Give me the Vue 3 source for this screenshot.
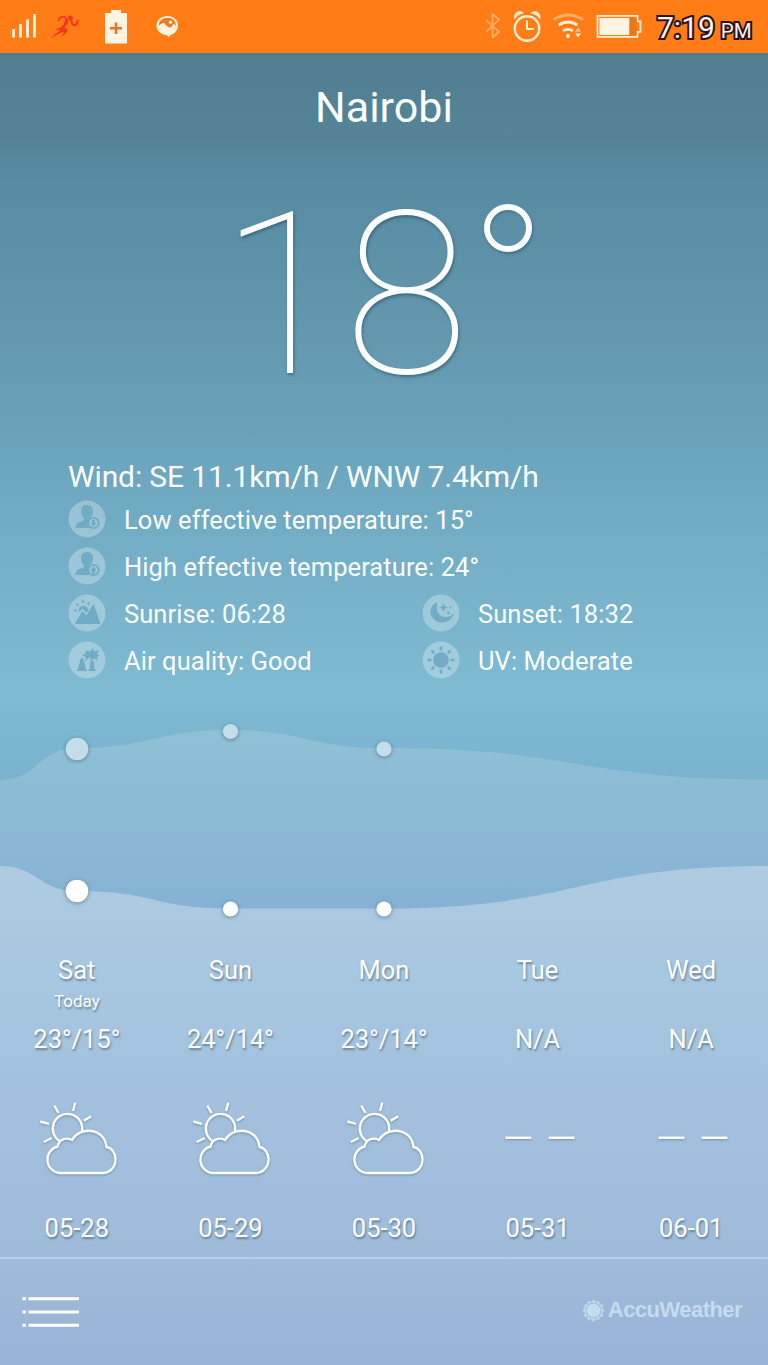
<template>
  <div class="weather-app">
    <!-- Status Bar -->
    <header class="status-bar">
      <svg class="icon-signal" width="26" height="24" viewBox="12 14 26 24">
        <path d="M14.5 29v8.5M21.5 24v13.5M28.5 19.5v18M35.5 14v23.5" stroke="#fff3df" stroke-width="2.8" />
      </svg>
      <svg class="icon-runner" width="30" height="26" viewBox="50 14 30 26">
        <circle cx="70.500" cy="18" r="2.500" fill="#f5381c" />
        <g fill="none" stroke="#f5381c">
          <path d="M58.500 21Q59.500 15.500 65.500 17" stroke-width="2" />
          <path d="M71.500 20.500Q72 26 75.500 25Q78 23.500 77.500 20" stroke-width="2.200" />
        </g>
        <path d="M64.500 16.500Q70 19 67.500 24L64.500 27.500Q69 29 66.500 32.500Q64.500 34.500 61.500 36.500Q64 33 63.500 31.500Q57 34.500 51 38Q55.500 33 60.500 30.500L55 29.500Q60 28.500 62.500 26Q66 21 64.500 16.500z" fill="#f5381c" />
      </svg>
      <svg class="icon-saver" width="24" height="36" viewBox="104 9 24 36">
        <path d="M105 13h6v-3h10v3h6v30.500h-22z" fill="#fff3e4" />
        <path d="M116 22.500v11.500M110 28.200h12" stroke="#e5761f" stroke-width="2.600" />
      </svg>
      <svg class="icon-photo" width="24" height="24" viewBox="155 14 24 24">
        <path d="M167.500 16c6 0 10.500 4 10.500 9.500c0 4.500-3 8-7 9.200l-2.500 2.500l-2-2.200c-6-.4-10-4.500-10-9.500c0-5.500 5-9.500 11-9.500z" fill="#fff3df" />
        <path d="M158.800 25.500c0-4.500 4-7.700 8.700-7.700c5 0 8.500 3.200 8.500 8.200l-2.200-2.500l-2.800 4l-3-.5l-4.500-4.500z" fill="#eb7a24" />
        <circle cx="170.500" cy="22.200" r="1.700" fill="#fff3df" />
      </svg>

      <svg class="icon-bluetooth" width="18" height="28" viewBox="484 12 18 28">
        <path d="M486 20l13 12l-6.500 5.500V14l6.500 5.500L486 32" fill="none" stroke="#ffb168" stroke-width="1.700" />
      </svg>
      <svg class="icon-alarm" width="30" height="34" viewBox="512 10 30 34">
        <g fill="none" stroke="#fff0d2">
          <circle cx="527" cy="28.500" r="12.200" stroke-width="2.400" />
          <path d="M527 20.500v8.500h7" stroke-width="2" />
        </g>
        <path d="M514.500 19c-1.500-6 5-10 9-6q-6.500 1.500-9 6zM540 19c1.500-6-5-10-9-6q6.500 1.500 9 6z" fill="#fff0d2" stroke="#fff0d2" stroke-width="0.600" />
      </svg>
      <svg class="icon-wifi" width="34" height="28" viewBox="552 11 34 28">
        <g fill="none">
          <path d="M553.500 19.500q14.500-9 29.500 0" stroke="#ffb063" stroke-width="3" />
          <path d="M558.500 25q9.500-6 19 0" stroke="#fff3df" stroke-width="2.800" />
          <path d="M563 30.800q5-3 10 0" stroke="#fff3df" stroke-width="2.700" />
        </g>
        <circle cx="568" cy="36" r="2" fill="#fff3df" />
        <path d="M575 31.500l3-4l3 4z" fill="#ffc58c" />
        <path d="M575 33.500h6l-3 4z" fill="#fff3df" />
      </svg>
      <svg class="icon-battery" width="46" height="26" viewBox="596 14 46 26">
        <path d="M597.500 15.800h40v5.500h3v10.500h-3v5h-40z" fill="none" stroke="#fff0d2" stroke-width="1.800" />
        <rect x="599.500" y="18" width="30" height="17" fill="#fff3e4" />
        <rect x="629.500" y="18" width="7" height="17" fill="#eb761b" />
      </svg>
      <div class="clock">7:19<span class="meridiem">PM</span></div>
    </header>

    <!-- Current Conditions -->
    <h1 class="city">Nairobi</h1>
    <div class="temperature">18<span class="degree"></span></div>

    <section class="details">
      <p class="wind">Wind: SE 11.1km/h / WNW 7.4km/h</p>
      <div class="detail-grid">
        <div
          v-for="item in details"
          :key="item.label"
          class="detail"
          :class="{ 'detail-wide': item.wide }"
        >
          <svg class="detail-icon" width="38" height="38" viewBox="0 0 38 38">
            <circle cx="19" cy="19" r="18.500" fill="#fff" fill-opacity="0.29" />
            <g v-if="item.icon === 'low' || item.icon === 'high'" class="glyph">
              <path d="M19 5c4 0 6 2.500 6 6.200c0 3-1.300 5.300-3 7v2.300l3 1.500v6H7.500c0-4.500 2-5.500 5.500-6.500c2.500-.7 3-1.200 3-2.800v-.5c-1.700-1.700-3-4-3-7C13 7.500 15 5 19 5z" />
              <circle cx="25.500" cy="23" r="5.200" class="glyph-ring" />
              <path v-if="item.icon === 'low'" d="M24 19.800h3v3h1.500L25.500 27l-3-4.200H24z" />
              <path v-else d="M24 26.500h3v-3h1.500l-3-4.200l-3 4.200H24z" />
            </g>
            <g v-else-if="item.icon === 'sunrise'" class="glyph">
              <path d="M6.500 30l8-13l4 4.500L25.500 9.500L32.500 30z" />
              <path d="M11 18.500q-1.500-6 4-6.800q4 0 5.500 4.300l-2.300 3l-3.500-4.500z" />
              <circle v-for="(p, i) in sunriseDots" :key="i" :cx="p[0]" :cy="p[1]" r="1.300" />
            </g>
            <g v-else-if="item.icon === 'sunset'" class="glyph">
              <path d="M15.500 8.500c-2.500 7.500 1 15.500 9.500 14.500q4-.5 7-4c-1.500 6-6.500 10-12.500 9.500c-6-.5-11-5-11-11c0-4.500 3-8 7-9z" />
              <path d="M21.500 9l1.200 3.300l3.300 1.200l-3.300 1.200l-1.200 3.300l-1.200-3.300l-3.300-1.200l3.300-1.200z" />
              <circle cx="26.500" cy="19" r="1.400" />
              <circle cx="28.500" cy="13.500" r="1" />
            </g>
            <g v-else-if="item.icon === 'air'" class="glyph">
              <path d="M8 30l2-2l2.500-10q2-2 3 0l2.500 10l1 2z" />
              <path d="M19.500 30l2-2l1-8h3.500l.5 8l2 2z" />
              <path d="M14 14l3-1l1-3.500l4 1l3-3.500l1 3.500l5-1.500l-2 4l2.500 1.500l-3 1.500l1.500 4l-4-2.500l-3 3l-1-4.500l-5 4.500l1-4z" />
            </g>
            <g v-else class="glyph">
              <circle cx="19" cy="19" r="7.800" />
              <ellipse
                v-for="n in 8"
                :key="n"
                cx="19"
                cy="7.500"
                rx="1.400"
                ry="2.200"
                :transform="`rotate(${n * 45} 19 19)`"
              />
            </g>
          </svg>
          <span>{{ item.label }}</span>
        </div>
      </div>
    </section>

    <!-- High / Low Waves -->
    <svg class="chart" width="768" height="240" viewBox="0 0 768 240">
      <defs>
        <linearGradient id="highFill" x1="0" y1="31" x2="0" y2="210" gradientUnits="userSpaceOnUse">
          <stop offset="0" stop-color="#8fc1d6" />
          <stop offset="0.600" stop-color="#8ab8d4" />
          <stop offset="1" stop-color="#85b2d3" />
        </linearGradient>
        <linearGradient id="lowFill" x1="0" y1="166" x2="0" y2="240" gradientUnits="userSpaceOnUse">
          <stop offset="0" stop-color="#aecbe1" />
          <stop offset="1" stop-color="#a9c8e0" />
        </linearGradient>
      </defs>
      <path d="M0 80C38 80 38 48 77 48C154 48 154 30 230 30C307 30 307 48 384 48C576 48 576 79.500 768 79.500V240H0z" fill="url(#highFill)" />
      <path d="M0 166C38 166 38 191 77 191C154 191 154 208.500 230 208.500H384C576 208.500 576 166 768 166V240H0z" fill="url(#lowFill)" />
      <g class="dots">
        <circle cx="77" cy="49" r="11.300" fill="#c3deea" />
        <circle cx="230.500" cy="31.500" r="7.600" fill="#c3deea" />
        <circle cx="384" cy="49" r="7.600" fill="#c3deea" />
        <circle cx="77" cy="191" r="11.300" fill="#fff" />
        <circle cx="230.500" cy="209" r="7.600" fill="#fff" />
        <circle cx="384" cy="209" r="7.600" fill="#fff" />
      </g>
    </svg>

    <!-- Forecast -->
    <section class="forecast">
      <div v-for="day in forecast" :key="day.date" class="day">
        <div class="day-name">{{ day.name }}</div>
        <div class="day-note">{{ day.note }}</div>
        <div class="day-temp">{{ day.temp }}</div>
        <svg class="day-icon" width="84" height="85" viewBox="35 155 84 85">
          <g v-if="day.cloudy">
            <path d="M60.500 201.500A14.700 14.700 0 1 1 82 191" />
            <path d="M54.300 165.500l4.200 7.500M75.300 162.500l-2.300 8.500M91.300 176.200l-7.600 4.600M40.300 181.500l8.700 2.300M43.700 202l8-4" />
            <path d="M59.500 233A13.500 13.500 0 0 1 57.500 206.500C59.500 198 67 197.500 72 200C80 186 104.500 187.500 106.500 207C112 208 115.500 213 115.500 219.500C115.500 227 110 233 102 233Z" />
          </g>
          <path v-else d="M44.500 197.700h26M87.500 197.700h26" />
        </svg>
        <div class="day-date">{{ day.date }}</div>
      </div>
    </section>

    <!-- Footer -->
    <footer class="footer">
      <svg class="menu" width="58" height="32" viewBox="22 1296 58 32">
        <path d="M22.500 1298.800h3.500M28.500 1298.800h50.500M22.500 1312h3.500M28.500 1312h50.500M22.500 1325.300h3.500M28.500 1325.300h50.500" />
      </svg>
      <div class="brand">
        <svg width="23" height="23" viewBox="-11.500 -11.500 23 23">
          <circle r="7" fill="#c5dbef" />
          <circle r="8.700" fill="none" stroke="#c5dbef" stroke-width="1.300" />
          <path
            v-for="n in 12"
            :key="n"
            d="M-1.700 -8.800L0 -11.400L1.700 -8.800z"
            fill="#c5dbef"
            :transform="`rotate(${n * 30})`"
          />
        </svg>
        <span>AccuWeather</span>
      </div>
    </footer>
  </div>
</template>

<script setup>
const details = [
  { icon: 'low', label: 'Low effective temperature: 15°', wide: true },
  { icon: 'high', label: 'High effective temperature: 24°', wide: true },
  { icon: 'sunrise', label: 'Sunrise: 06:28' },
  { icon: 'sunset', label: 'Sunset: 18:32' },
  { icon: 'air', label: 'Air quality: Good' },
  { icon: 'uv', label: 'UV: Moderate' }
];

const sunriseDots = [[7.5, 16.5], [9.5, 10.8], [15, 7.8], [20.5, 9.5]];

const forecast = [
  { name: 'Sat', note: 'Today', temp: '23°/15°', date: '05-28', cloudy: true },
  { name: 'Sun', note: '', temp: '24°/14°', date: '05-29', cloudy: true },
  { name: 'Mon', note: '', temp: '23°/14°', date: '05-30', cloudy: true },
  { name: 'Tue', note: '', temp: 'N/A', date: '05-31', cloudy: false },
  { name: 'Wed', note: '', temp: 'N/A', date: '06-01', cloudy: false }
];
</script>

<style>
body {
  margin: 0;
}
</style>

<style scoped>
.weather-app {
  width: 768px;
  height: 1365px;
  display: flex;
  flex-direction: column;
  overflow: hidden;
  font-family: Roboto, "Liberation Sans", sans-serif;
  color: #fafeff;
  background: linear-gradient(180deg, #507d90 53px, #558498 140px, #578ba1 180px, #6499b0 350px, #6da6bf 470px, #78b2cb 600px, #7fbad3 690px, #78b2d0 790px);
}

svg {
  display: block;
  flex: none;
}

/* Status Bar */
.status-bar {
  height: 53px;
  flex: none;
  display: flex;
  align-items: flex-start;
  background: #ff7c17;
}

.icon-signal {
  margin: 14px 0 0 11px;
}

.icon-runner {
  margin: 14px 0 0 13px;
}

.icon-saver {
  margin: 9px 0 0 24px;
}

.icon-photo {
  margin: 14px 0 0 27px;
}

.icon-bluetooth {
  margin: 12px 0 0 305px;
}

.icon-alarm {
  margin: 10px 0 0 10px;
}

.icon-wifi {
  margin: 11px 0 0 10px;
}

.icon-battery {
  margin: 14px 0 0 10px;
}

.clock {
  margin: 10px 0 0 15px;
  font-size: 30px;
  line-height: 36px;
  white-space: nowrap;
  color: #f3f3fa;
  -webkit-text-stroke: 4px #2a1118;
  paint-order: stroke fill;
}

.meridiem {
  margin-left: 6px;
  font-size: 20.5px;
}

/* Current Conditions */
.city {
  margin: 24px 0 0;
  font-size: 43px;
  line-height: 60px;
  font-weight: 400;
  text-align: center;
}

.temperature {
  margin: 45px 0 0 220px;
  height: 227px;
  display: flex;
  font-size: 227px;
  line-height: 227px;
  font-weight: 100;
  text-shadow: 1px 2px 3px rgba(30, 60, 80, 0.5);
}

.degree {
  box-sizing: border-box;
  width: 48px;
  height: 48px;
  margin: 22px 0 0 15px;
  border: 6px solid #fafeff;
  border-radius: 50%;
  box-shadow: 1px 2px 3px rgba(30, 60, 80, 0.4), inset 1px 2px 2px rgba(30, 60, 80, 0.25);
}

.details {
  margin: 50px 0 16px 68px;
}

.wind {
  margin: 0;
  height: 37px;
  font-size: 30px;
  line-height: 36px;
  letter-spacing: -0.13px;
}

.detail-grid {
  display: grid;
  grid-template-columns: 354px 1fr;
  grid-auto-rows: 47px;
}

.detail {
  display: flex;
  align-items: center;
  gap: 18px;
  font-size: 25.5px;
  letter-spacing: 0.08px;
  white-space: nowrap;
}

.detail-icon {
  margin-bottom: 1px;
}

.detail-wide {
  grid-column: 1 / -1;
}

.glyph {
  fill: #70acc6;
}

.glyph-ring {
  fill: #9cc7da;
  stroke: #70acc6;
  stroke-width: 1.8;
}

/* Chart */
.dots {
  filter: drop-shadow(0 1px 2px rgba(60, 90, 110, 0.6));
}

/* Forecast */
.forecast {
  box-sizing: border-box;
  height: 317px;
  flex: none;
  display: grid;
  grid-template-columns: repeat(5, 1fr);
  padding-top: 14px;
  background: linear-gradient(180deg, #a9c8e0, #a3c2de 40%, #9fbbda);
}

.day {
  display: flex;
  flex-direction: column;
  align-items: center;
  font-size: 25.5px;
  line-height: 32px;
  text-shadow: 1px 2px 2px rgba(70, 90, 110, 0.6);
}

.day-note {
  height: 30px;
  font-size: 17px;
  line-height: 30px;
}

.day-temp {
  margin-top: 7px;
}

.day-icon {
  margin: 40px 0 32px;
  fill: none;
  stroke: #fafeff;
  stroke-width: 2.4;
  filter: drop-shadow(0 1px 1px rgba(80, 95, 115, 0.5));
}

/* Footer */
.footer {
  flex: 1;
  display: flex;
  justify-content: space-between;
  align-items: center;
  padding: 0 26px 0 22px;
  border-top: 2px solid #b4d0ea;
  background: linear-gradient(180deg, #9fbada, #98b3d6);
}

.menu {
  stroke: #fff;
  stroke-width: 3;
}

.brand {
  display: flex;
  align-items: center;
  gap: 3px;
  margin-top: -4px;
  font-family: "Liberation Sans", Arial, sans-serif;
  font-size: 22px;
  letter-spacing: -0.55px;
  font-weight: 700;
  color: #c5dbef;
}
</style>
